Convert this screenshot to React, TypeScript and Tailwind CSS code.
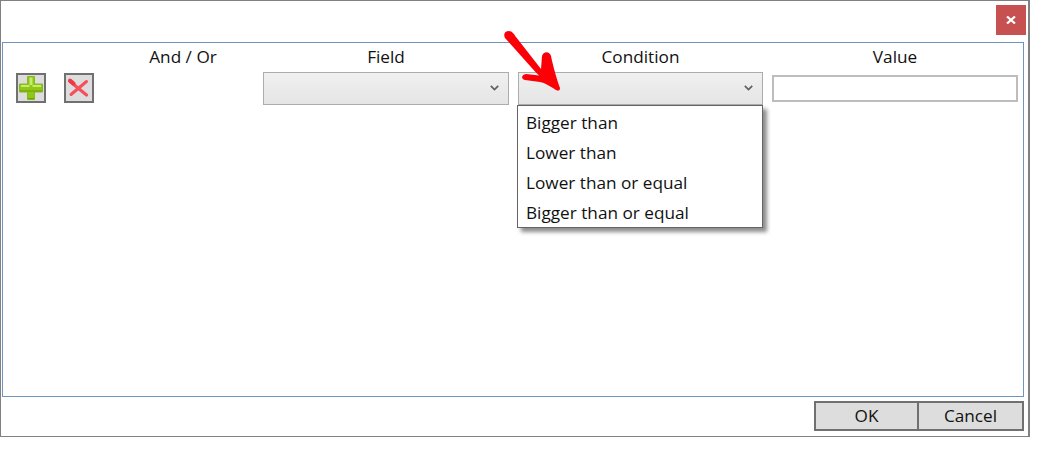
const font = { fontFamily: '"Open Sans", sans-serif' }

const options = ["Bigger than", "Lower than", "Lower than or equal", "Bigger than or equal"]

const Chevron = () => (
  <svg width="9" height="6" viewBox="0 0 9 6" fill="none" className="mb-[2px]">
    <path d="M0.8 0.8 L4.5 4.6 L8.2 0.8" stroke="#606060" strokeWidth="1.7" />
  </svg>
)

const ComboBox = ({ width }: { width: string }) => (
  <div className={`${width} h-[33px] flex items-center justify-end pr-[9px] border border-[#acacac] bg-gradient-to-b from-[#f0f0f0] to-[#e5e5e5]`}>
    <Chevron />
  </div>
)

const PlusIcon = () => (
  <svg width="26" height="26" viewBox="0 0 26 26">
    <path d="M9.5 1.5 H16.5 V9 H24.5 V17 H16.5 V24.5 H9.5 V17 H1.5 V9 H9.5 Z" fill="#8fc712" stroke="#86b820" strokeWidth="1" />
    <path d="M11.5 2.5 H14.5 V10 H23 V12 H14.5 V10 H11.5 V12 H3 V10 H11.5 Z" fill="#c8e878" />
    <path d="M10 23 H16 V24 H10 Z M2 15.5 H24 V16.5 H2 Z" fill="#6f9e12" />
  </svg>
)

const CrossIcon = () => (
  <svg width="26" height="26" viewBox="0 0 26 26">
    <g style={{ filter: "blur(0.7px)" }}>
      <path d="M4 6.5 L20.5 20" stroke="#f6505c" strokeWidth="3.2" strokeLinecap="round" />
      <path d="M20.5 6.5 L5 19.5" stroke="#f6505c" strokeWidth="3" strokeLinecap="round" />
      <path d="M4 5.5 L7.5 8.5" stroke="#ee3844" strokeWidth="4" strokeLinecap="round" />
    </g>
  </svg>
)

const IconButton = ({ children }: { children: React.ReactNode }) => (
  <button className="w-[30px] h-[30px] flex items-center justify-center border-2 border-[#707070] bg-[#dddddd] overflow-hidden">
    {children}
  </button>
)

const App = () => {
  return (
    <div className="relative w-[1038px] h-[455px] bg-white text-[#111111] overflow-hidden" style={font}>
      {/* Dialog window */}
      <div className="w-[1030px] h-[437px] border border-r-2 border-[#808080] flex flex-col">
        {/* Title bar */}
        <div className="h-[41px] flex justify-end items-start pt-[4px] pr-[2px]">
          <button className="w-[30px] h-[30px] bg-[#c75050] flex items-center justify-center">
            <svg width="10" height="8" viewBox="0 0 10 8">
              <path d="M1 0.5 L9 7.5 M9 0.5 L1 7.5" stroke="white" strokeWidth="2.2" />
            </svg>
          </button>
        </div>

        {/* Filter panel */}
        <div className="ml-[1px] w-[1022px] h-[355px] border border-[#6d95bd] relative">
          <div className="flex h-[27px] items-center text-[17.2px]">
            <div className="ml-[100px] w-[160px] text-center">And / Or</div>
            <div className="w-[246px] text-center">Field</div>
            <div className="ml-[9px] w-[245px] text-center">Condition</div>
            <div className="ml-[9px] w-[246px] text-center">Value</div>
          </div>
          <div className="flex items-start mt-[2px]">
            <div className="w-[260px] flex gap-[18px] pl-[13px] pt-[1px]">
              <IconButton><PlusIcon /></IconButton>
              <IconButton><CrossIcon /></IconButton>
            </div>
            <ComboBox width="w-[246px]" />
            <div className="ml-[9px]"><ComboBox width="w-[245px]" /></div>
            <div className="ml-[9px] mt-[3px] w-[246px] h-[27px] border-2 border-[#bdbdbd] bg-white" />
          </div>

          {/* Open dropdown */}
          <div className="absolute left-[514px] top-[62px] w-[246px] h-[123px] border border-[#646464] bg-white shadow-[4px_4px_4px_rgba(0,0,0,0.45)] pt-[2px]">
            {options.map((option) => (
              <div key={option} className="h-[30px] pl-[8px] flex items-center text-[17.2px]">{option}</div>
            ))}
          </div>
        </div>

        {/* Footer buttons */}
        <div className="flex justify-end mt-[4px] mr-[4px]">
          <button className="w-[105px] h-[30px] border-2 border-[#707070] bg-[#dddddd] text-[17.2px]">OK</button>
          <button className="w-[105px] h-[30px] border-2 border-l-0 border-[#707070] bg-[#dddddd] text-[17.2px]">Cancel</button>
        </div>
      </div>

      {/* Red annotation arrow */}
      <svg className="absolute left-0 top-0 pointer-events-none" width="1038" height="455" viewBox="0 0 1038 455">
        <path
          d="M505 38 C503 34 505 31 509 31 C512 31 514 34 516 37 L541 69 L542 56 C543 52 549 50 551 56 C553 66 557 80 560 88 C560 91 558 91 556 90 C550 86 545 83 540 82 C535 81 530 81 525 80 C521 79 521 75 526 74 L539 75.5 L535 71.5 Z"
          fill="#fb0007"
        />
      </svg>
    </div>
  )
}

export default App
